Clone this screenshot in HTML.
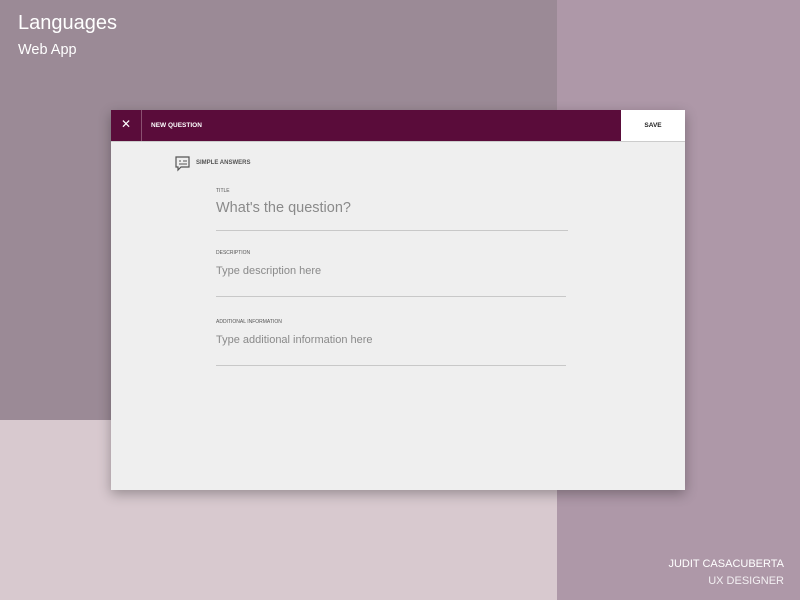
<!DOCTYPE html>
<html><head><style>
body{margin:0;width:800px;height:600px;position:relative;overflow:hidden;font-family:"Liberation Sans",sans-serif;}
.a{position:absolute;}
</style></head><body>
<div class="a" style="left:0;top:0;width:557px;height:420px;background:#9b8a96"></div>
<div class="a" style="left:557px;top:0;width:243px;height:600px;background:#ae98a8"></div>
<div class="a" style="left:0;top:420px;width:557px;height:180px;background:#d8c9cf"></div>
<div class="a" style="left:18px;top:12px;color:#fff;font-size:20px">Languages</div>
<div class="a" style="left:18px;top:42px;color:#fff;font-size:14.5px">Web App</div>
<div class="a" style="right:16px;top:556px;color:#fff;font-size:11px;text-align:right;line-height:17px">JUDIT CASACUBERTA<br><span style="opacity:.85">UX DESIGNER</span></div>
<div class="a" style="left:111px;top:110px;width:574px;height:380px;background:#efefef;box-shadow:0 4px 12px rgba(0,0,0,.3)"></div>
<div class="a" style="left:111px;top:110px;width:510px;height:31px;background:#5a0c3a"></div>
<div class="a" style="left:141px;top:110px;width:1px;height:31px;background:#8a5070"></div>
<div class="a" style="left:111px;top:141px;width:574px;height:1px;background:#ccc"></div>
<div class="a" style="left:121px;top:117px;color:#fff;font-size:12px">✕</div>
<div class="a" style="left:151px;top:122px;color:#fff;font-size:6.5px;font-weight:bold">NEW QUESTION</div>
<div class="a" style="left:621px;top:110px;width:64px;height:31px;background:#fff;color:#222;font-size:6.5px;font-weight:bold;text-align:center;line-height:32px">SAVE</div>
<svg class="a" style="left:175px;top:156px" width="16" height="16" viewBox="0 0 16 16"><path d="M1 1h13v10H6l-3 3v-3H1z" fill="none" stroke="#555" stroke-width="1.2"/><path d="M4 5h2M8 5h4M4 8h8" stroke="#555"/></svg>
<div class="a" style="left:196px;top:160px;color:#555;font-size:6px;font-weight:bold">SIMPLE ANSWERS</div>
<div class="a" style="left:216px;top:188px;color:#555;font-size:5px">TITLE</div>
<div class="a" style="left:216px;top:200px;color:#8a8a8a;font-size:14.5px">What's the question?</div>
<div class="a" style="left:216px;top:230px;width:352px;height:1px;background:#c8c8c8"></div>
<div class="a" style="left:216px;top:250px;color:#555;font-size:5px">DESCRIPTION</div>
<div class="a" style="left:216px;top:265px;color:#8a8a8a;font-size:11px">Type description here</div>
<div class="a" style="left:216px;top:296px;width:350px;height:1px;background:#c8c8c8"></div>
<div class="a" style="left:216px;top:319px;color:#555;font-size:5px">ADDITIONAL INFORMATION</div>
<div class="a" style="left:216px;top:334px;color:#8a8a8a;font-size:11px">Type additional information here</div>
<div class="a" style="left:216px;top:365px;width:350px;height:1px;background:#c8c8c8"></div>
</body></html>
